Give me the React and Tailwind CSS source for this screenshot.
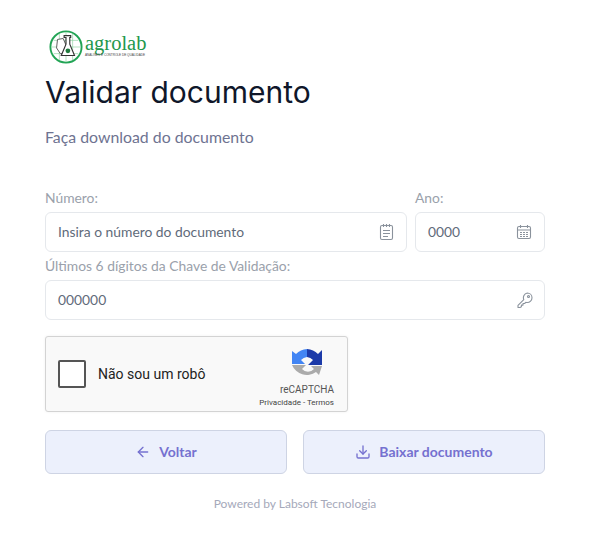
import React from 'react';
import { ArrowLeft, Download } from 'lucide-react';

const Logo = () => (
  <div className="flex items-center h-[38px] pl-[4px]">
    <svg width="34" height="34" viewBox="0 0 36 36" fill="none">
      <circle cx="18" cy="18" r="16.5" stroke="#22a455" strokeWidth="2" />
      <path d="M5 11h26M3 18h30M5 25h26M11 4v28M18 2v32M25 4v28" stroke="#8fd3a3" strokeWidth="0.7" />
      <path d="M9 10l6-1 3 7-3 9h-3l-4-6z" fill="#fff" stroke="#555" strokeWidth="1" />
      <path d="M16 6h7v2h-1v7l5 12h-14l5-12V8h-2z" fill="#fff" stroke="#333" strokeWidth="1.200" />
      <circle cx="20" cy="22" r="2.500" fill="#1f7a3d" />
    </svg>
    <div className="flex flex-col ml-[2px] font-['Liberation_Serif',serif]">
      <span className="mt-[-4px] text-[20.5px] leading-[20px] text-[#23984c]">agrolab</span>
      <span className="text-[3.1px] leading-[5px] text-[#444] font-['Liberation_Sans',sans-serif] whitespace-nowrap">ANÁLISES E CONTROLE DE QUALIDADE</span>
    </div>
  </div>
);

const NoteIcon = () => (
  <svg width="16" height="18" viewBox="0 0 16 18" fill="none" stroke="#8a929c" strokeWidth="1.1">
    <rect x="2.500" y="2.500" width="12" height="14" rx="1.500" />
    <path d="M5.500 1v3M8.500 1v3M11.500 1v3M5 7.500h7M5 10.500h7M5 13.500h5" />
  </svg>
);

const CalendarIcon = () => (
  <svg width="16" height="16" viewBox="0 0 16 16" fill="none" stroke="#8a929c" strokeWidth="1.1">
    <rect x="1.500" y="2.500" width="13" height="12" rx="1.500" />
    <path d="M4.500 1v3M11.500 1v3M1.500 6h13" />
    <path d="M4 8.500h2M7 8.500h2M10 8.500h2M4 10.500h2M7 10.500h2M10 10.500h2M4 12.500h2M7 12.500h2M10 12.500h2" strokeWidth="1" />
  </svg>
);

const KeyIcon = () => (
  <svg width="16" height="16" viewBox="0 0 16 16" fill="none" stroke="#8a929c" strokeWidth="1.1" strokeLinejoin="round" className="translate-x-[1px]">
    <path d="M10.200 1c2.700 0 4.800 2.100 4.800 4.700 0 2.700-2.200 4.800-4.800 4.800-.5 0-1-.1-1.400-.2L7.600 11.500H6v1.600H4.400v1.600L3 15.500H1v-2.200l5.800-5.700A4.800 4.800 0 0 1 10.200 1z" />
    <circle cx="11.500" cy="4.500" r="1" />
  </svg>
);

const Field = ({ label, value, icon, className = '' }) => (
  <div className={className}>
    <label className="block mb-[4px] text-[13.85px] leading-[20px] text-[#9aa1ab]">{label}</label>
    <div className="flex items-center justify-between h-[40px] px-[12px] bg-white border border-[#e5e8ec] rounded-[6px]">
      <span className="text-[13.85px] leading-[18px] text-[#5f6b7a]">{value}</span>
      {icon}
    </div>
  </div>
);

const RecaptchaLogo = () => (
  <svg width="32" height="32" viewBox="0 0 32 32">
    <path d="M15 0a16 16 0 0 1 11 5l4-4v15H16l5-5a9 9 0 0 0-6-3z" fill="#1c3aa9" />
    <path d="M15 0v8a9 9 0 0 0-6 3l4 4H0V2l4 3a16 16 0 0 1 11-5z" fill="#4285f4" />
    <path d="M0 16h14l-4 4a8 8 0 0 0 12 0l-3-3h11l-3 9-3-3A16 16 0 0 1 0 16z" fill="#ababab" />
  </svg>
);

const Recaptcha = () => (
  <div className="flex items-center justify-between w-[303px] h-[76px] bg-[#f9f9f9] border border-[#d3d3d3] rounded-[3px] shadow-[0_0_3px_rgba(0,0,0,0.06)] font-['Roboto',sans-serif]">
    <div className="flex items-center">
      <div className="w-[28px] h-[28px] ml-[12px] bg-white border-2 border-[#555] rounded-[2px]" />
      <span className="ml-[12px] text-[14px] text-[#222]">Não sou um robô</span>
    </div>
    <div className="flex flex-col items-end w-[100px] mr-[13px] pt-[9px]">
      <div className="mr-[10px]">
        <RecaptchaLogo />
      </div>
      <span className="mt-[3px] text-[10px] leading-[12px] text-[#555]">reCAPTCHA</span>
      <span className="mt-[1px] text-[8px] leading-[12px] text-[#444] whitespace-nowrap">Privacidade - Termos</span>
    </div>
  </div>
);

const ActionButton = ({ icon, children }) => (
  <button className="flex flex-1 items-center justify-center gap-[8px] h-[44px] bg-[#ecf0fc] border border-[#ced4e4] rounded-[6px] text-[14px] leading-[18px] font-bold text-[#7571d0]">
    {icon}
    <span>{children}</span>
  </button>
);

export default function App() {
  return (
    <div className="min-h-[541px] bg-white px-[45px] pt-[28px] font-['Lato',sans-serif]">
      <div className="w-[500px]">
        <Logo />
        <h1 className="mt-[6px] text-[30px] leading-[40px] text-[#0f172a] font-['Inter',sans-serif]">Validar documento</h1>
        <p className="mt-[15px] text-[15.85px] leading-[20px] text-[#6e7391]">Faça download do documento</p>

        <div className="flex gap-[8px] mt-[41px]">
          <Field className="flex-1" label="Número:" value="Insira o número do documento" icon={<NoteIcon />} />
          <Field className="w-[130px]" label="Ano:" value="0000" icon={<CalendarIcon />} />
        </div>
        <Field className="mt-[4px]" label="Últimos 6 dígitos da Chave de Validação:" value="000000" icon={<KeyIcon />} />

        <div className="mt-[16px]">
          <Recaptcha />
        </div>

        <div className="flex gap-[16px] mt-[18px]">
          <ActionButton icon={<ArrowLeft size={16} strokeWidth={2} />}>Voltar</ActionButton>
          <ActionButton icon={<Download size={16} strokeWidth={2} />}>Baixar documento</ActionButton>
        </div>

        <p className="mt-[22px] text-center text-[12px] leading-[16px] text-[#a5a9ba]">Powered by Labsoft Tecnologia</p>
      </div>
    </div>
  );
}
